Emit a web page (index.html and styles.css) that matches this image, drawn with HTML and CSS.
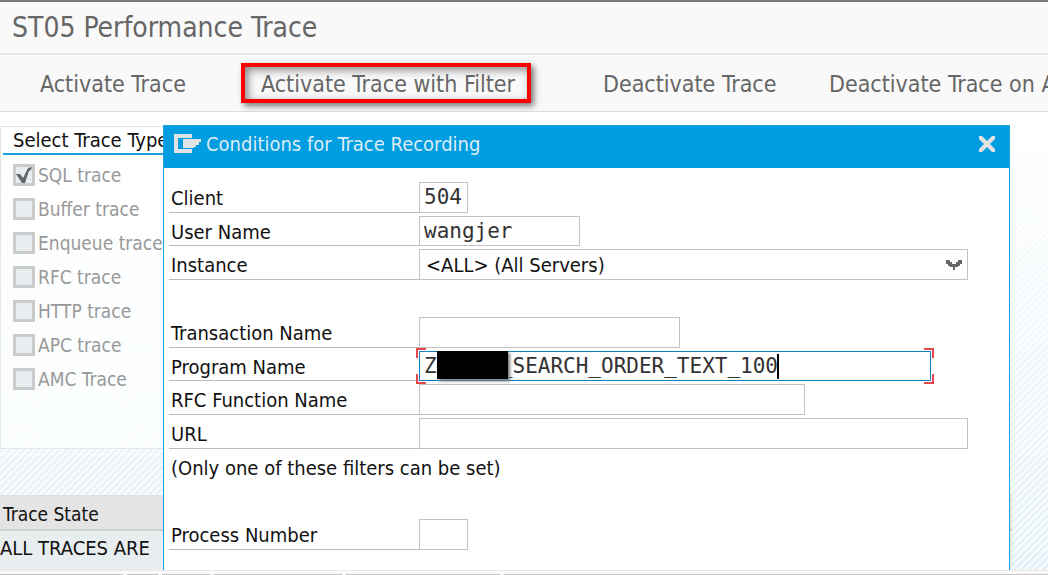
FILE: index.html
```html
<!DOCTYPE html>
<html lang="en">
<head>
<meta charset="utf-8">
<title>ST05 Performance Trace</title>
<link rel="stylesheet" href="styles.css">
</head>
<body>
<div class="screen">
  <header class="titlebar"><h1 class="title">ST05 Performance Trace</h1></header>
  <nav class="toolbar">
    <button class="tool" type="button">Activate Trace</button>
    <button class="tool tool-marked" type="button">Activate Trace with Filter</button>
    <button class="tool" type="button">Deactivate Trace</button>
    <button class="tool" type="button">Deactivate Trace on A</button>
  </nav>
  <main class="work">
    <fieldset class="types">
      <legend class="types-title">Select Trace Type</legend>
      <label class="type"><input class="tick" type="checkbox" checked disabled>SQL trace</label>
      <label class="type"><input class="tick" type="checkbox" disabled>Buffer trace</label>
      <label class="type"><input class="tick" type="checkbox" disabled>Enqueue trace</label>
      <label class="type"><input class="tick" type="checkbox" disabled>RFC trace</label>
      <label class="type"><input class="tick" type="checkbox" disabled>HTTP trace</label>
      <label class="type"><input class="tick" type="checkbox" disabled>APC trace</label>
      <label class="type"><input class="tick" type="checkbox" disabled>AMC Trace</label>
      <svg class="tick-mark" viewBox="0 0 18 18" aria-hidden="true"><path d="M1 8 L5 8 L8 12 L13 2 L17 1 L16 4 L14 5 L10 17 L7 17 Z" fill="#666"/></svg>
    </fieldset>
    <table class="state">
      <thead><tr><th>Trace State</th></tr></thead>
      <tbody><tr><td>ALL TRACES ARE</td></tr></tbody>
    </table>
  </main>
  <footer class="statusbar"><i></i><i></i><i></i><i></i><i></i><i></i></footer>

  <section class="dialog" role="dialog" aria-labelledby="dialog-title">
    <div class="dialog-head">
      <svg class="dialog-icon" viewBox="0 0 27 20" aria-hidden="true"><path d="M0 0 H18 V4 H4 V15 H18 V19 H0 Z M9 5 H27 V8 H25 V11 H22 V13 H20 V14 H9 Z" fill="#dfe3e6"/></svg>
      <h2 class="dialog-title" id="dialog-title">Conditions for Trace Recording</h2>
      <button class="close" type="button" aria-label="Close"><svg viewBox="0 0 18 18" width="18" height="18"><path d="M1 1H4L9 6L14 1H17V4L12 9L17 14V17H14L9 12L4 17H1V14L6 9L1 4Z" fill="#e3e3e3"/></svg></button>
    </div>
    <form class="form">
      <div class="row"><label class="label" for="client">Client</label><input class="field w-tiny" id="client" value="504"></div>
      <div class="row"><label class="label" for="user">User Name</label><input class="field w-small" id="user" value="wangjer"></div>
      <div class="row"><label class="label" for="instance">Instance</label>
        <div class="holder w-full"><select class="field field-select" id="instance"><option>&lt;ALL&gt; (All Servers)</option></select>
          <svg class="chevron" viewBox="0 0 16 10" aria-hidden="true"><path d="M0 0H4V2H6V4H10V2H12V0H16V4H14V6H12V7H9V10H7V7H4V6H2V4H0Z" fill="#666"/></svg></div>
      </div>
      <div class="row row-empty"></div>
      <div class="row"><label class="label" for="tcode">Transaction Name</label><input class="field w-medium" id="tcode"></div>
      <div class="row"><label class="label" for="program">Program Name</label>
        <div class="holder w-wide"><input class="field field-active" id="program" value="Z     _SEARCH_ORDER_TEXT_100">
          <span class="redaction"></span><span class="caret"></span>
          <span class="corner tl"></span><span class="corner tr"></span><span class="corner bl"></span><span class="corner br"></span></div>
      </div>
      <div class="row"><label class="label" for="rfc">RFC Function Name</label><input class="field w-large" id="rfc"></div>
      <div class="row"><label class="label" for="url">URL</label><input class="field w-full" id="url"></div>
      <div class="row"><p class="note">(Only one of these filters can be set)</p></div>
      <div class="row row-empty"></div>
      <div class="row"><label class="label" for="process">Process Number</label><input class="field w-tiny" id="process"></div>
    </form>
  </section>
</div>
</body>
</html>
```
FILE: styles.css
```css
* { box-sizing: border-box; }

body {
  margin: 0;
  color: #111;
  font: 20px/24px "DejaVu Sans Condensed", "DejaVu Sans", sans-serif;
}

.screen {
  position: relative;
  display: flex;
  flex-direction: column;
  min-height: 100vh;
  overflow: hidden;
  background: #fff;
}

.titlebar {
  padding: 8px 12px;
  border-top: 2px solid #7b7b7b;
  border-bottom: 2px solid #e6e6e6;
  background: #f9f9f9;
}

.title {
  margin: 0;
  color: #666;
  font-size: 28px;
  font-weight: 400;
  line-height: 35px;
}

.toolbar {
  display: grid;
  grid-template-columns: 221px 342px 226px max-content;
  align-items: center;
  justify-items: start;
  height: 57px;
  padding-left: 20px;
  border-bottom: 1px solid #dcdcdc;
  background: #f9f9f9;
}

.tool {
  height: 40px;
  padding: 2px 16px 0;
  border: 4px solid transparent;
  background: none;
  color: #666;
  font: inherit;
  font-size: 23px;
  line-height: 28px;
  white-space: nowrap;
}

.tool-marked {
  padding: 2px 12px 0 16px;
  border-color: #fe0000;
  box-shadow: 3px 3px 6px #777, inset 3px 3px 8px #888;
}

.work {
  display: flex;
  flex: 1;
  flex-direction: column;
  justify-content: space-between;
  padding-top: 14px;
  background:
    linear-gradient(#fff, rgba(255, 255, 255, 0)),
    repeating-linear-gradient(135deg, #e4f1f8 0, #e4f1f8 2px, #fbfdfe 3px, #fbfdfe 4px, #e4f1f8 5px);
}

.types {
  position: relative;
  width: 96%;
  height: 323px;
  margin: 0;
  padding: 31px 12px 0;
  border: 1px solid #e3e6e8;
  background: rgba(255, 255, 255, 0.65);
}

.types-title {
  position: absolute;
  top: 0;
  left: 2px;
  width: 98%;
  padding: 0 10px;
  border-bottom: 2px solid #1a9fe0;
  line-height: 26px;
}

.type {
  display: flex;
  align-items: center;
  gap: 3px;
  height: 34px;
  color: #999;
  font-size: 19px;
}

.tick {
  appearance: none;
  width: 22px;
  height: 22px;
  margin: 0;
  border: 3px solid #cbcbcb;
  background: #e8edf1;
}

.tick-mark {
  position: absolute;
  top: 39px;
  left: 14px;
  width: 18px;
  height: 18px;
}

.state {
  width: 1012px;
  border-collapse: collapse;
  border-top: 2px solid #e0e0e0;
  color: #111;
}

.state th {
  height: 34px;
  padding: 2px 3px 0;
  border-bottom: 2px solid #d0d0d0;
  background: #e4e4e4;
  font-size: 19px;
  font-weight: 400;
  text-align: left;
}

.state td {
  height: 40px;
  padding: 0 0 6px;
  background: #e8edf0;
}

.statusbar {
  display: grid;
  grid-template-columns: 123px 31px 48px 128px 154px 1fr;
  gap: 4px;
  height: 5px;
  padding-top: 3px;
  border-top: 1px solid #ececec;
  background: #f9f9f9;
}

.statusbar i { background: #c6c6c6; }

.dialog {
  position: absolute;
  top: 125px;
  right: 38px;
  bottom: 5px;
  left: 163px;
  display: flex;
  flex-direction: column;
  border: 1px solid #1a9fe0;
  border-bottom: 0;
  background: #fff;
}

.dialog-head {
  display: flex;
  align-items: center;
  height: 42px;
  padding: 0 13px 6px 10px;
  background: #009de0;
}

.dialog-icon { width: 27px; height: 20px; }

.dialog-title {
  flex: 1;
  margin: 0;
  padding-left: 5px;
  color: #dcecf5;
  font-size: 20px;
  font-weight: 400;
}

.close {
  display: flex;
  padding: 0;
  border: 0;
  background: none;
}

.form {
  display: grid;
  flex: 1;
  grid-auto-rows: 1fr;
  padding: 11px 42px 20px 5px;
}

.row {
  display: grid;
  grid-template-columns: 250px 1fr;
  padding-top: 3px;
}

.label {
  padding: 4px 2px 0;
  border-bottom: 1px solid #bbb;
}

.note {
  grid-column: 1 / -1;
  margin: 0;
  padding: 4px 2px 0;
}

.field {
  width: 100%;
  height: 100%;
  padding: 0 4px;
  border: 1px solid #c3c3c3;
  border-radius: 0;
  outline: 0;
  background: #fff;
  color: #333;
  font: 21px/24px "DejaVu Sans Mono", monospace;
}

.holder { position: relative; }

.field-select {
  appearance: none;
  padding: 0 6px;
  color: #111;
  font: inherit;
}

.chevron {
  position: absolute;
  top: 11px;
  right: 6px;
  width: 16px;
  height: 10px;
}

.field-active { border-color: #1580bf; }

.w-tiny { width: 49px; }
.w-small { width: 161px; }
.w-medium { width: 261px; }
.w-large { width: 386px; }
.w-wide { width: 512px; }
.w-full { width: 549px; }

.redaction {
  position: absolute;
  top: 0;
  left: 18px;
  width: 71px;
  height: 28px;
  background: #000;
  box-shadow: 2px 2px 3px #777;
}

.caret {
  position: absolute;
  top: 3px;
  left: 358px;
  width: 2px;
  height: 25px;
  background: #000;
}

.corner {
  position: absolute;
  width: 10px;
  height: 10px;
  border: 0 solid #e5484b;
}

.tl { top: -3px; left: -3px; border-width: 2px 0 0 2px; }
.tr { top: -3px; right: -3px; border-width: 2px 2px 0 0; }
.bl { bottom: -3px; left: -3px; border-width: 0 0 2px 2px; }
.br { right: -3px; bottom: -3px; border-width: 0 2px 2px 0; }
```
